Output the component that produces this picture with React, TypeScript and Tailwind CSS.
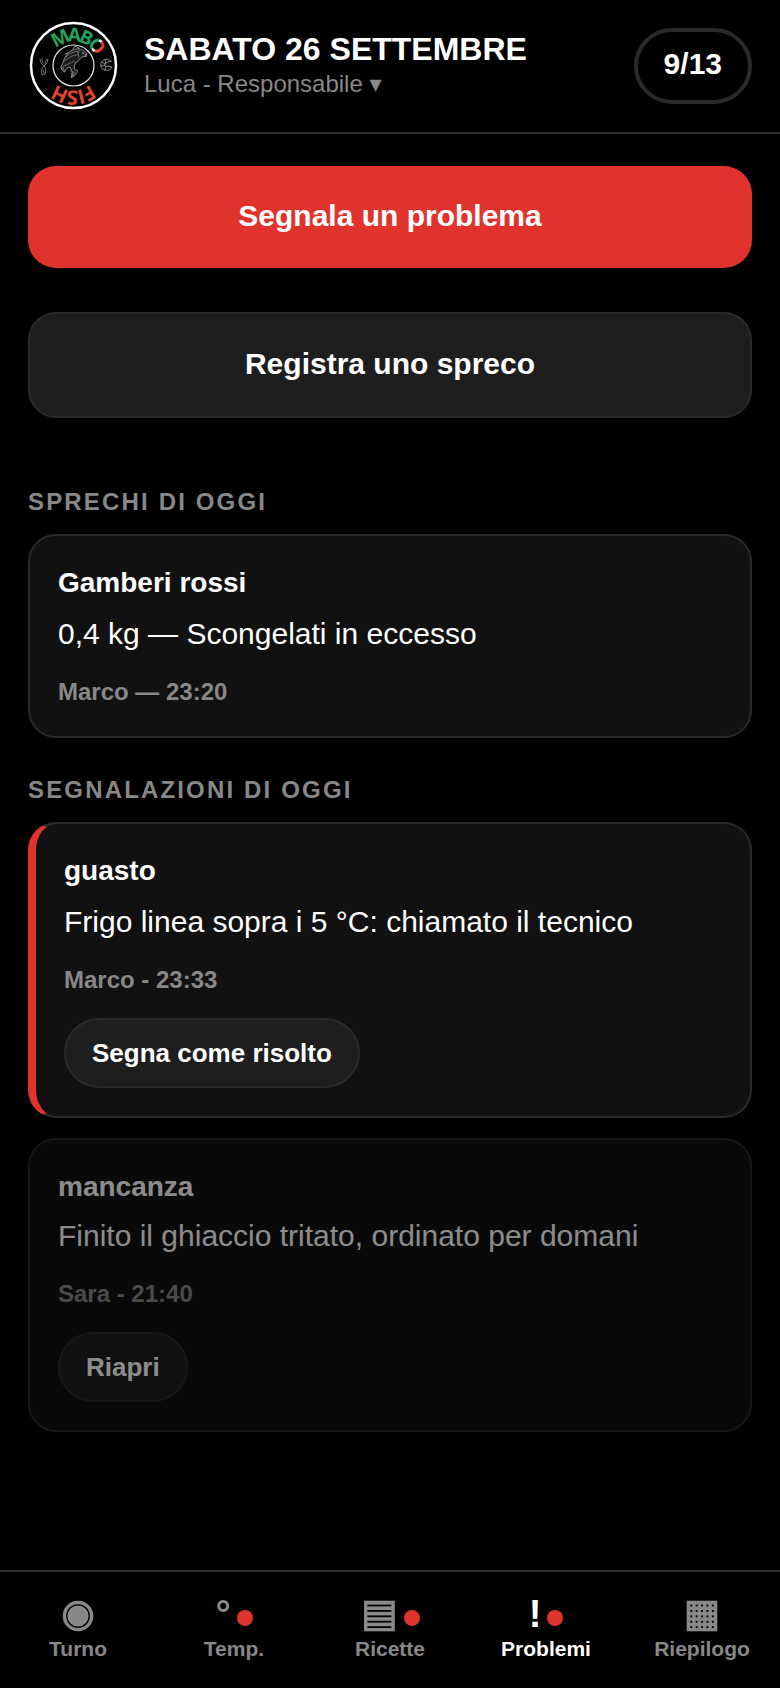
import * as React from "react";

interface IReport {
  kind: string;
  text: string;
  meta: string;
  resolved: boolean;
}

interface ITab {
  label: string;
  icon: React.ReactNode;
  alert?: boolean;
  active?: boolean;
}

const reports: IReport[] = [
  {
    kind: "guasto",
    text: "Frigo linea sopra i 5 °C: chiamato il tecnico",
    meta: "Marco - 23:33",
    resolved: false,
  },
  {
    kind: "mancanza",
    text: "Finito il ghiaccio tritato, ordinato per domani",
    meta: "Sara - 21:40",
    resolved: true,
  },
];

const steps = [4.6, 10, 15.4, 20.8, 26.2];

function TabIcon(props: { children: React.ReactNode }) {
  return (
    <svg
      viewBox="-1 0 38 42"
      className="h-[42px] w-[38px]"
      fill="currentColor"
      aria-hidden="true"
    >
      {props.children}
    </svg>
  );
}

const shiftIcon = (
  <TabIcon>
    <circle cx="18" cy="24" r="15.3" />
    <circle cx="18" cy="24" r="11.2" fill="none" stroke="#000" strokeWidth="1.3" />
  </TabIcon>
);

const recipesIcon = (
  <TabIcon>
    <rect x="3" y="8.7" width="30.8" height="30.6" />
    {steps.map((step) => (
      <rect key={step} x="6.4" y={8 + step} width="24" height="1.8" fill="#000" />
    ))}
  </TabIcon>
);

const summaryIcon = (
  <TabIcon>
    <rect x="2.7" y="8.7" width="30.6" height="30.6" />
    {steps.map((y) =>
      steps.map((x) => (
        <rect
          key={x + "-" + y}
          x={1.7 + x}
          y={8 + y}
          width="1.9"
          height="1.9"
          fill="#000"
        />
      ))
    )}
  </TabIcon>
);

const tabs: ITab[] = [
  { label: "Turno", icon: shiftIcon },
  { label: "Temp.", icon: "°", alert: true },
  { label: "Ricette", icon: recipesIcon, alert: true },
  { label: "Problemi", icon: "!", alert: true, active: true },
  { label: "Riepilogo", icon: summaryIcon },
];

function Logo() {
  return (
    <svg
      viewBox="0 0 92 92"
      className="size-[92px] shrink-0 font-['Open_Sans',sans-serif] font-bold"
      role="img"
      aria-label="Mabo Fish"
    >
      <defs>
        <path id="ringTop" d="M13.5 45.5a32 32 0 0 1 64 0" />
        <path id="ringBottom" d="M77.5 45.5a32 32 0 0 1 -64 0" />
        <linearGradient
          id="flag"
          gradientUnits="userSpaceOnUse"
          x1="66"
          y1="18"
          x2="78"
          y2="28"
        >
          <stop offset="0.35" stopColor="#1fa35a" />
          <stop offset="0.35" stopColor="#fff" />
          <stop offset="0.55" stopColor="#fff" />
          <stop offset="0.55" stopColor="#e0452f" />
        </linearGradient>
      </defs>
      <circle cx="45.5" cy="45.5" r="42.5" fill="#000" stroke="#fff" strokeWidth="2.5" />
      <circle cx="45.5" cy="45.5" r="20.5" fill="none" stroke="#e8e8e8" strokeWidth="1.2" />
      <text fontSize="19" dy="8" fill="url(#flag)" textAnchor="middle">
        <textPath href="#ringTop" startOffset="56%">
          MABO
        </textPath>
      </text>
      <text fontSize="20" dy="7" fill="#e0452f" textAnchor="middle">
        <textPath href="#ringBottom" startOffset="50%">
          FISH
        </textPath>
      </text>
      {/* fish */}
      <g strokeLinecap="round" strokeLinejoin="round">
        <path
          d="M59 34c-3-4-7-6-11-5-5 1-10 5-12 11l-3 7c1 3 2 5 4 5 0-3 2-4 5-5l3 6-2 5 4-3 3-4-4-2 1-6c3-1 5-4 7-6l5-1-2-1z"
          fill="#1c1c1c"
          stroke="#a8a8a8"
          strokeWidth="0.8"
        />
        <path
          d="M38 37c4-4 9-6 14-6M37 41c4-4 8-6 13-6M36 46c4-2 7-3 10-5M43 50l1 7M46 52l-1 5M35 47l1 4M50 32l1 6"
          fill="none"
          stroke="#8c8c8c"
          strokeWidth="0.8"
          strokeDasharray="2 1"
        />
        <path d="M45 29l2-3 4 2M40 33l-3 1" fill="none" stroke="#bbb" strokeWidth="0.8" />
        <circle cx="55" cy="33" r="0.8" fill="#ddd" />
      </g>
      {/* squid */}
      <g fill="none" stroke="#8f8f8f" strokeWidth="0.8" strokeLinecap="round">
        <path d="M12 39l1 4 3 3 3-3 1-4-2 1-1 4M14 39l1 4M16 46c-3 2-3 6-2 9l3-1c1-3 1-5-1-8M15 50l1 3" />
      </g>
      {/* shrimp */}
      <g fill="none" stroke="#a5a5a5" strokeWidth="0.8" strokeLinecap="round">
        <path d="M83 41c-4-3-8-2-10 2-1 4 1 7 4 7 3 1 6 0 7-3l-4-1c-2 1-4 0-3-2 1-2 3-2 6-3zM77 40l1 3M74 42l3 2M73 46l4-1M77 50l1-4" />
      </g>
    </svg>
  );
}

function Card(props: {
  title: string;
  text: string;
  meta: string;
  className: string;
  textClassName?: string;
  children?: React.ReactNode;
}) {
  return (
    <article
      className={
        "rounded-[28px] border-2 border-[#2a2a2a] bg-[#111] p-7 " +
        props.className
      }
    >
      <h3 className="text-[28px] leading-[38px] font-bold">{props.title}</h3>
      <p className={"text-[30px] leading-11 " + (props.textClassName || "mt-2.5")}>
        {props.text}
      </p>
      <p className="mt-5 text-2xl leading-8 font-bold text-[#888]">
        {props.meta}
      </p>
      {props.children}
    </article>
  );
}

export default function App(): React.ReactElement {
  return (
    <div className="flex min-h-screen flex-col bg-black font-['Liberation_Sans','DejaVu_Sans',sans-serif] text-white">
      <header className="flex items-center gap-6 border-b-2 border-[#2a2a2a] px-7 py-5">
        <Logo />
        <div className="flex min-w-0 flex-1 flex-col items-start">
          <h1 className="text-[32px] leading-9 font-bold">
            SABATO 26 SETTEMBRE
          </h1>
          <button className="text-2xl leading-[34px] text-[#888]">
            Luca - Responsabile ▾
          </button>
        </div>
        <div className="flex h-[76px] shrink-0 items-center rounded-full border-4 border-[#2a2a2a] px-[26px] pb-1.5 text-[30px] font-bold">
          9/13
        </div>
      </header>

      <main className="flex flex-1 flex-col px-7 pt-8 pb-10">
        <button className="h-[102px] rounded-[28px] bg-[#e1332d] pb-1 text-[30px] font-bold">
          Segnala un problema
        </button>
        <button className="mt-11 h-[106px] rounded-[28px] border-2 border-[#2a2a2a] bg-[#1e1e1e] pb-1 text-[30px] font-bold">
          Registra uno spreco
        </button>

        <h2 className="mt-[68px] mb-4 text-2xl leading-8 font-bold tracking-[0.09em] text-[#888]">
          SPRECHI DI OGGI
        </h2>
        <Card
          title="Gamberi rossi"
          text="0,4 kg — Scongelati in eccesso"
          meta="Marco — 23:20"
          className=""
        />

        <h2 className="mt-9 mb-4 text-2xl leading-8 font-bold tracking-[0.09em] text-[#888]">
          SEGNALAZIONI DI OGGI
        </h2>
        <div className="flex flex-col gap-5">
          {reports.map((report, index) => (
            <Card
              key={index}
              title={report.kind}
              text={report.text}
              meta={report.meta}
              className={
                report.resolved
                  ? "opacity-55"
                  : "border-l-8 border-l-[#e1332d]"
              }
              textClassName={report.resolved ? "mt-2" : "mt-2.5"}
            >
              <button className="mt-[22px] block h-[70px] rounded-full border-2 border-[#2a2a2a] bg-[#1e1e1e] px-[26px] text-[26px] font-bold">
                {report.resolved ? "Riapri" : "Segna come risolto"}
              </button>
            </Card>
          ))}
        </div>
      </main>

      <nav className="sticky bottom-0 grid grid-cols-5 border-t-2 border-[#2a2a2a] bg-black pt-5 pb-[27px]">
        {tabs.map((tab) => (
          <button
            key={tab.label}
            className={
              "flex flex-col items-center font-bold " +
              (tab.active ? "text-white" : "text-[#888]")
            }
          >
            <span className="flex h-[42px] gap-1.5 text-[38px] leading-11">
              {tab.icon}
              {tab.alert && (
                <span className="mt-[18px] size-4 rounded-full bg-[#e1332d]" />
              )}
            </span>
            <span className="mt-[3px] text-[21px] leading-6">{tab.label}</span>
          </button>
        ))}
      </nav>
    </div>
  );
}
